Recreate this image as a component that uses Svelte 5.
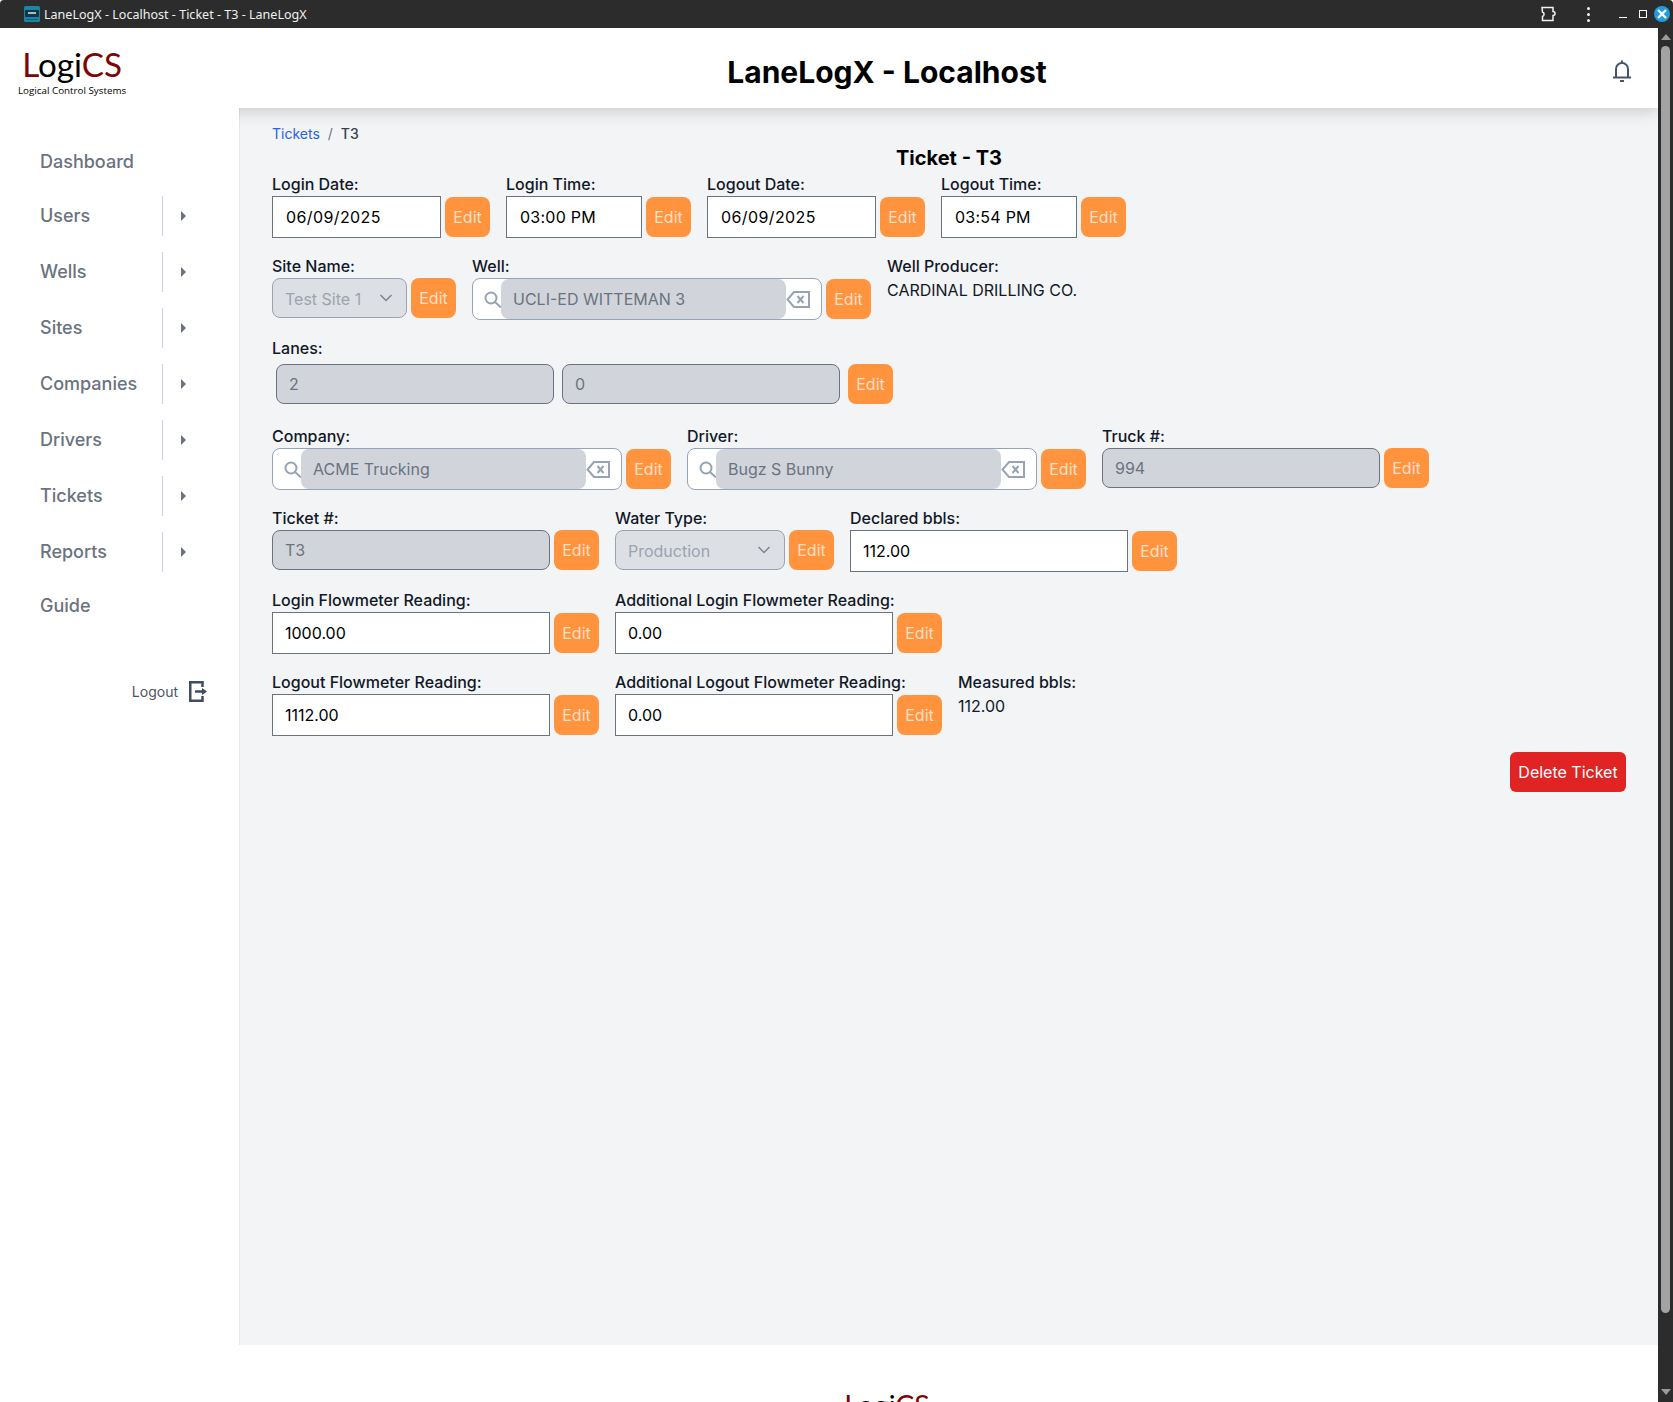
<script>
    const navItems = [
        { name: "Dashboard" },
        { name: "Users", sub: true },
        { name: "Wells", sub: true },
        { name: "Sites", sub: true },
        { name: "Companies", sub: true },
        { name: "Drivers", sub: true },
        { name: "Tickets", sub: true },
        { name: "Reports", sub: true },
        { name: "Guide" },
    ];
</script>

{#snippet logo()}
    <div class="logo">
        <div class="logo-word"><span class="red">L</span>ogi<span class="red">CS</span></div>
        <div class="logo-sub">Logical Control Systems</div>
    </div>
{/snippet}

{#snippet editBtn()}
    <button class="edit">Edit</button>
{/snippet}

{#snippet searchBox(value)}
    <div class="search">
        <svg class="search-icon" width="17" height="17" viewBox="0 0 17 17" fill="none" stroke="#94a3b8" stroke-width="2"><circle cx="7" cy="7" r="5.5"/><path d="M11 11l6 5.5"/></svg>
        <input class="search-input" type="text" {value} disabled />
        <svg class="clear-icon" width="24" height="17" viewBox="0 0 24 17" fill="none" stroke="#94a3b8" stroke-width="2"><path d="M8 1h15v15H8L1.500 8.500Z"/><path d="M11.500 5l6 7M17.500 5l-6 7"/></svg>
    </div>
{/snippet}

<div class="window">
    <div class="titlebar">
        <svg class="favicon" width="16" height="16" viewBox="0 0 16 16"><rect width="16" height="16" rx="1.500" fill="#1b86a3"/><rect x="1" y="4" width="14" height="7" fill="#1c3346"/><rect x="4" y="6" width="8" height="2" fill="#a9bcc6"/><rect x="2" y="13" width="12" height="1" fill="#0f5f78"/></svg>
        <span class="title-text">LaneLogX - Localhost - Ticket - T3 - LaneLogX</span>
        <svg class="puzzle" width="16" height="16" viewBox="0 0 16 16" fill="none" stroke="#f2f2f2" stroke-width="1.500"><path d="M2 1.500h11v4a1.800 1.800 0 0 1 0 4v5H2.500v-4a2.400 2.400 0 0 0 0-4.500Z"/></svg>
        <div class="dots"><i></i><i></i><i></i></div>
        <div class="minimize"></div>
        <div class="maximize"></div>
        <div class="close">
            <svg width="12" height="12" viewBox="0 0 12 12" stroke="#fff" stroke-width="2.400"><path d="M2 2l8 8M10 2l-8 8"/></svg>
        </div>
    </div>

    <div class="below">
        <div class="page">
            <header>
                <div class="header-logo">{@render logo()}</div>
                <h1>LaneLogX - Localhost</h1>
                <div class="header-right">
                    <svg width="18" height="22" viewBox="0 0 18 22" fill="none" stroke="#46546b" stroke-width="2"><path d="M9 3V0.500"/><path d="M3 17V9a6 6 0 0 1 12 0v8"/><path d="M0 17.500h18"/><path d="M7 21h4"/></svg>
                </div>
            </header>

            <div class="layout">
                <aside>
                    <nav>
                        {#each navItems as item}
                            <div class="nav-item" class:plain={!item.sub}>
                                <span class="nav-name">{item.name}</span>
                                {#if item.sub}
                                    <span class="nav-caret">
                                        <svg width="5" height="10" viewBox="0 0 5 10"><path d="M0 0l5 5-5 5Z" fill="#6b7280"/></svg>
                                    </span>
                                {/if}
                            </div>
                        {/each}
                    </nav>
                    <div class="logout">
                        <span>Logout</span>
                        <svg width="18" height="21" viewBox="0 0 18 21" fill="none" stroke="#3f4d63" stroke-width="2.500"><path d="M13.500 6V1.250H1.250v18.500h12.250V15"/><path d="M6 10.500h8"/><path d="M13 7l5 3.500-5 3.500Z" fill="#3f4d63" stroke="none"/></svg>
                    </div>
                </aside>

                <main>
                    <div class="crumbs">
                        <a href="#tickets">Tickets</a>
                        <span class="sep">/</span>
                        <span class="current">T3</span>
                    </div>
                    <h2>Ticket - T3</h2>

                    <div class="row">
                        <div class="field">
                            <span class="label">Login Date:</span>
                            <div class="control"><input class="plain-input date w-date" type="text" value="06/09/2025" />{@render editBtn()}</div>
                        </div>
                        <div class="field">
                            <span class="label">Login Time:</span>
                            <div class="control"><input class="plain-input time w-time" type="text" value="03:00 PM" />{@render editBtn()}</div>
                        </div>
                        <div class="field">
                            <span class="label">Logout Date:</span>
                            <div class="control"><input class="plain-input date w-date" type="text" value="06/09/2025" />{@render editBtn()}</div>
                        </div>
                        <div class="field">
                            <span class="label">Logout Time:</span>
                            <div class="control"><input class="plain-input time w-time" type="text" value="03:54 PM" />{@render editBtn()}</div>
                        </div>
                    </div>

                    <div class="row">
                        <div class="field">
                            <span class="label">Site Name:</span>
                            <div class="control">
                                <div class="select w-site">
                                    <span>Test Site 1</span>
                                    <svg width="14" height="8" viewBox="0 0 14 8" fill="none" stroke="#7d8591" stroke-width="1.500"><path d="M1.500 1l5.500 5.500L12.500 1"/></svg>
                                </div>
                                {@render editBtn()}
                            </div>
                        </div>
                        <div class="field">
                            <span class="label">Well:</span>
                            <div class="control">{@render searchBox("UCLI-ED WITTEMAN 3")}{@render editBtn()}</div>
                        </div>
                        <div class="field">
                            <span class="label">Well Producer:</span>
                            <div class="static">CARDINAL DRILLING CO.</div>
                        </div>
                    </div>

                    <div class="row">
                        <div class="field">
                            <span class="label">Lanes:</span>
                            <div class="control">
                                <input class="locked lane" type="text" value="2" disabled />
                                <input class="locked lane" type="text" value="0" disabled />
                                {@render editBtn()}
                            </div>
                        </div>
                    </div>

                    <div class="row">
                        <div class="field">
                            <span class="label">Company:</span>
                            <div class="control">{@render searchBox("ACME Trucking")}{@render editBtn()}</div>
                        </div>
                        <div class="field">
                            <span class="label">Driver:</span>
                            <div class="control">{@render searchBox("Bugz S Bunny")}{@render editBtn()}</div>
                        </div>
                        <div class="field">
                            <span class="label">Truck #:</span>
                            <div class="control"><input class="locked w-wide" type="text" value="994" disabled />{@render editBtn()}</div>
                        </div>
                    </div>

                    <div class="row">
                        <div class="field">
                            <span class="label">Ticket #:</span>
                            <div class="control"><input class="locked w-wide" type="text" value="T3" disabled />{@render editBtn()}</div>
                        </div>
                        <div class="field">
                            <span class="label">Water Type:</span>
                            <div class="control">
                                <div class="select w-water">
                                    <span>Production</span>
                                    <svg width="14" height="8" viewBox="0 0 14 8" fill="none" stroke="#7d8591" stroke-width="1.500"><path d="M1.500 1l5.500 5.500L12.500 1"/></svg>
                                </div>
                                {@render editBtn()}
                            </div>
                        </div>
                        <div class="field">
                            <span class="label">Declared bbls:</span>
                            <div class="control"><input class="plain-input w-wide" type="text" value="112.00" />{@render editBtn()}</div>
                        </div>
                    </div>

                    <div class="row">
                        <div class="field">
                            <span class="label">Login Flowmeter Reading:</span>
                            <div class="control"><input class="plain-input w-wide" type="text" value="1000.00" />{@render editBtn()}</div>
                        </div>
                        <div class="field">
                            <span class="label">Additional Login Flowmeter Reading:</span>
                            <div class="control"><input class="plain-input w-wide" type="text" value="0.00" />{@render editBtn()}</div>
                        </div>
                    </div>

                    <div class="row last">
                        <div class="field">
                            <span class="label">Logout Flowmeter Reading:</span>
                            <div class="control"><input class="plain-input w-wide" type="text" value="1112.00" />{@render editBtn()}</div>
                        </div>
                        <div class="field">
                            <span class="label">Additional Logout Flowmeter Reading:</span>
                            <div class="control"><input class="plain-input w-wide" type="text" value="0.00" />{@render editBtn()}</div>
                        </div>
                        <div class="field">
                            <span class="label">Measured bbls:</span>
                            <div class="static">112.00</div>
                        </div>
                    </div>

                    <div class="actions">
                        <button class="delete">Delete Ticket</button>
                    </div>
                </main>
            </div>

            <footer>{@render logo()}</footer>
        </div>

        <div class="scrollbar">
            <svg width="10" height="6" viewBox="0 0 10 6"><path d="M0 6l5-6 5 6Z" fill="#9a9a9a"/></svg>
            <div class="thumb"></div>
            <svg width="10" height="6" viewBox="0 0 10 6"><path d="M0 0l5 6 5-6Z" fill="#9a9a9a"/></svg>
        </div>
    </div>
</div>

<style>
    :global(body) {
        margin: 0;
        background: #fff;
        font-family: Inter, "Liberation Sans", sans-serif;
    }

    .window {
        height: 1402px;
        display: flex;
        flex-direction: column;
        overflow: hidden;
    }

    .titlebar {
        height: 28px;
        flex: none;
        background: #2c2c2c;
        display: flex;
        align-items: center;
        padding-left: 24px;
        border-radius: 4px 4px 0 0;
        color: #f0f0f0;
    }

    .favicon {
        margin-right: 4px;
    }

    .title-text {
        font-family: "Noto Sans", sans-serif;
        font-size: 12.550px;
    }

    .puzzle {
        margin-left: auto;
    }

    .dots {
        margin-left: 31px;
        display: flex;
        flex-direction: column;
        gap: 3px;
    }

    .dots i {
        width: 3px;
        height: 3px;
        background: #f2f2f2;
        border-radius: 50%;
    }

    .minimize {
        width: 8px;
        height: 1px;
        background: #fff;
        margin: 6px 0 0 29px;
    }

    .maximize {
        width: 6px;
        height: 6px;
        border: 1px solid #fff;
        margin-left: 12px;
    }

    .close {
        width: 16px;
        height: 16px;
        border-radius: 50%;
        background: #1f9de0;
        margin: 0 3px 0 7px;
        display: flex;
        align-items: center;
        justify-content: center;
    }

    .below {
        flex: 1;
        display: flex;
        min-height: 0;
    }

    .page {
        width: 1658px;
        flex: none;
        display: flex;
        flex-direction: column;
        overflow: hidden;
    }

    .scrollbar {
        flex: 1;
        background: #2c2c2c;
        display: flex;
        flex-direction: column;
        align-items: center;
        padding: 6px 0 7px;
    }

    .thumb {
        flex: 1;
        width: 9px;
        margin: 6px 0 76px;
        background: #a3a3a3;
        border-radius: 5px;
    }

    header {
        height: 80px;
        flex: none;
        display: flex;
        align-items: center;
        background: #fff;
        box-shadow: 0 4px 14px rgba(0, 0, 0, 0.16);
        position: relative;
        z-index: 1;
    }

    .header-logo {
        width: 240px;
        flex: none;
        padding-left: 18px;
        box-sizing: border-box;
        align-self: flex-start;
        padding-top: 18px;
    }

    h1 {
        flex: 1;
        margin: 8px 0 0;
        text-align: center;
        font-size: 30px;
        line-height: 36px;
        font-weight: 700;
        color: #000;
    }

    .header-right {
        width: 124px;
        flex: none;
        padding-left: 79px;
        box-sizing: border-box;
        display: flex;
        margin-top: 6px;
    }

    .logo {
        display: inline-flex;
        flex-direction: column;
        align-items: center;
        font-family: Lato, "Open Sans", sans-serif;
        color: #000;
    }

    .logo-word {
        font-size: 33.200px;
        line-height: 36px;
    }

    .logo-word .red {
        color: #7d0505;
    }

    .logo-sub {
        margin-top: 3px;
        font-family: "Open Sans", sans-serif;
        font-size: 9.800px;
        line-height: 12px;
        white-space: nowrap;
    }

    .layout {
        height: 1237px;
        flex: none;
        display: flex;
    }

    aside {
        width: 239px;
        flex: none;
        background: #fff;
        padding-top: 33px;
        box-sizing: border-box;
        position: relative;
        z-index: 2;
    }

    nav {
        display: flex;
        flex-direction: column;
        gap: 16px;
        padding-left: 40px;
    }

    .nav-item {
        height: 40px;
        display: flex;
        align-items: center;
        color: #6b7280;
        font-size: 18px;
        font-weight: 500;
    }

    .nav-item:first-child {
        height: 39px;
    }

    .nav-item:last-child {
        height: 32px;
    }

    .nav-name {
        width: 122px;
        padding-bottom: 2px;
    }

    .nav-item.plain .nav-name {
        padding: 2px 0 0;
    }

    .nav-caret {
        height: 40px;
        border-left: 1px solid #c5d0e0;
        padding-left: 18px;
        display: flex;
        align-items: center;
    }

    .logout {
        display: flex;
        align-items: center;
        justify-content: flex-end;
        gap: 11px;
        margin-top: 61px;
        padding-right: 32px;
        color: #4b5563;
        font-size: 14px;
    }

    main {
        flex: 1;
        background: #f3f4f6;
        border-left: 1px solid #e5e7eb;
        padding: 16px 32px 0;
    }

    .crumbs {
        display: flex;
        gap: 8px;
        font-size: 14px;
        line-height: 20px;
    }

    .crumbs a {
        color: #2563eb;
        text-decoration: none;
    }

    .sep {
        color: #6b7280;
    }

    .current {
        color: #374151;
        font-weight: 500;
    }

    h2 {
        margin: 0 0 2px;
        text-align: center;
        font-size: 20px;
        line-height: 28px;
        font-weight: 700;
        color: #000;
    }

    .row {
        display: flex;
        gap: 16px;
        align-items: flex-start;
        margin-bottom: 18px;
    }

    .row.last {
        margin-bottom: 16px;
    }

    .label {
        display: block;
        height: 20px;
        line-height: 20px;
        margin-bottom: 2px;
        font-size: 16px;
        font-weight: 500;
        color: #111827;
        white-space: nowrap;
    }

    .static {
        font-size: 16px;
        line-height: 24px;
        color: #111827;
    }

    .control {
        display: flex;
        align-items: center;
    }

    input {
        box-sizing: border-box;
        font-family: inherit;
        font-size: 16px;
        margin: 0;
        outline: none;
    }

    .plain-input {
        height: 42px;
        padding: 0 12px;
        background: #fff;
        border: 1px solid #6b7280;
        border-radius: 0;
        color: #000;
    }

    .date {
        padding-left: 13px;
        letter-spacing: 0.4px;
    }

    .time {
        padding-left: 13px;
        letter-spacing: 0.25px;
    }

    .locked {
        height: 40px;
        padding: 0 12px;
        background: #d1d5db;
        border: 1px solid #6b7280;
        border-radius: 8px;
        color: #6b7280;
        opacity: 1;
    }

    .lane {
        width: 278px;
        margin: 4px;
    }

    .lane ~ .edit {
        margin-left: 4px;
    }

    .w-date {
        width: 169px;
    }

    .w-time {
        width: 136px;
    }

    .w-wide {
        width: 278px;
    }

    .w-site {
        width: 135px;
    }

    .w-water {
        width: 170px;
    }

    .select {
        height: 40px;
        box-sizing: border-box;
        display: flex;
        align-items: center;
        justify-content: space-between;
        padding: 0 13px 0 12px;
        background: #dcdfe4;
        border: 1px solid #9ca3af;
        border-radius: 8px;
        color: #9ca3af;
        font-size: 16px;
    }

    .select span {
        padding-top: 2px;
    }

    .search {
        width: 350px;
        height: 42px;
        box-sizing: border-box;
        display: flex;
        align-items: center;
        padding-left: 11px;
        background: #fff;
        border: 1px solid #94a3b8;
        border-radius: 8px;
    }

    .search-icon {
        flex: none;
    }

    .search-input {
        flex: none;
        width: 285px;
        height: 40px;
        padding: 0 12px;
        background: #d1d5db;
        border: 0;
        border-radius: 8px;
        color: #6b7280;
    }

    .edit {
        width: 45px;
        height: 40px;
        margin-left: 4px;
        padding: 0;
        background: #ff933e;
        border: 0;
        border-radius: 8px;
        color: rgba(255, 255, 255, 0.72);
        font-family: inherit;
        font-size: 16px;
    }

    .actions {
        display: flex;
        justify-content: flex-end;
    }

    .delete {
        width: 116px;
        height: 40px;
        padding: 0;
        background: #e02424;
        border: 0;
        border-radius: 6px;
        color: #fff;
        font-family: inherit;
        font-size: 16px;
    }

    footer {
        flex: none;
        padding: 42px 124px 0 240px;
        text-align: center;
    }

    footer .logo-word {
        font-size: 28.500px;
    }
</style>
